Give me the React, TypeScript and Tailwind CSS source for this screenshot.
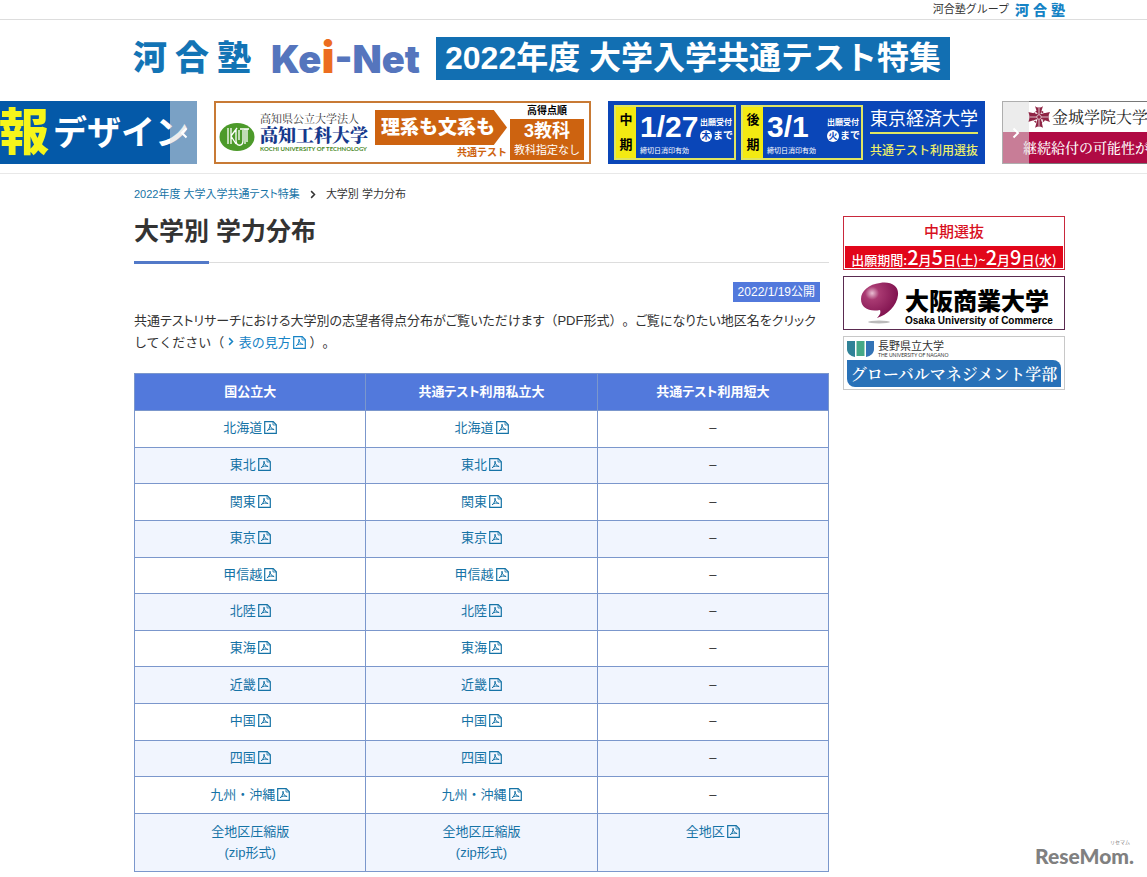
import type { ReactNode } from 'react';

const regions = ['北海道', '東北', '関東', '東京', '甲信越', '北陸', '東海', '近畿', '中国', '四国', '九州・沖縄'];

function PdfIcon() {
    return (
        <svg className="inline-block w-[13px] h-[13px] ml-[2px] align-[-2px]" viewBox="0 0 13 13" fill="none" stroke="currentColor" aria-hidden="true">
            <path d="M.7 .7H9.2L12.3 3.8V12.3H.7Z" strokeWidth="1.2" />
            <path d="M9 .9V4H12" strokeWidth=".8" />
            <path d="M6 3.2C6.2 6 5.2 8.2 3 10M6 3.2C6 6 7.6 8 10.2 8.6M3.6 9.2C5.4 8.1 7.6 7.7 10 8.5" strokeWidth="1" />
        </svg>
    );
}

function Chevron({ className, flip = false }: { className: string; flip?: boolean }) {
    return (
        <svg className={className} viewBox="0 0 8 12" fill="none" stroke="currentColor" strokeWidth="2" aria-hidden="true">
            <path d={flip ? 'M6.5 1.5L2 6L6.5 10.5' : 'M1.5 1.5L6 6L1.5 10.5'} />
        </svg>
    );
}

function KawaijukuLogo({ className }: { className: string }) {
    return (
        <a href="#" className={className}>
            <span>河</span>
            <span>合</span>
            <span>塾</span>
        </a>
    );
}

function DesignBanner() {
    return (
        <a href="#" className="flex h-full items-center justify-end gap-1 bg-[#0459a8] pr-2 font-black text-white">
            <span className="text-[50px] leading-[60px] text-[#f6f51a]">報</span>
            <span className="text-[34px] leading-[60px] font-bold">デザイン</span>
        </a>
    );
}

function KochiBanner() {
    return (
        <a href="#" className="flex h-full border-2 border-[#c87a35] bg-white pl-[3px] pr-1">
            <svg className="mt-[19px] h-[30px] w-[36px] shrink-0" viewBox="0 0 36 30" aria-hidden="true">
                <ellipse cx="18" cy="15" rx="17.5" ry="14" fill="#4c9a2a" />
                <path d="M9 6V22M12 6V22M12 14L18 6M12 14L17 22M17 8V18C17 25 24 25 24 18V8M20 8V18M21 7H30M26 7V22M28 7V20" fill="none" stroke="#fff" strokeWidth="1.3" />
            </svg>
            <div className="ml-[5px] mt-2 w-[112px] shrink-0 whitespace-nowrap font-['Noto_Serif_CJK_JP','Noto_Sans_CJK_JP',serif]">
                <p className="text-[11px] leading-[14px] text-[#333]">高知県公立大学法人</p>
                <p className="text-[18px] font-black leading-[19px] text-[#16398c]">高知工科大学</p>
                <p className="font-['Lato',sans-serif] text-[6px] font-bold leading-[9px] text-[#4c8a2a]">KOCHI UNIVERSITY OF TECHNOLOGY</p>
            </div>
            <div className="ml-[3px] mt-[7px] w-[132px] shrink-0 text-right">
                <p className="bg-[#cd6310] pr-[12px] text-[19px] font-black leading-[35px] text-white [clip-path:polygon(0_0,90%_0,100%_50%,90%_100%,0_100%)]">理系も文系も</p>
                <p className="text-[10px] font-bold leading-[15px] text-[#cd6310]">共通テスト</p>
            </div>
            <div className="ml-[3px] w-[74px] shrink-0 text-center">
                <p className="text-[10px] font-bold leading-[16px] text-black">高得点順</p>
                <div className="h-[41px] bg-[#cd6310] text-white">
                    <p className="text-[18px] font-bold leading-[24px]">3教科</p>
                    <p className="text-[11px] leading-[15px]">教科指定なし</p>
                </div>
            </div>
        </a>
    );
}

function DateBox({ term, date, day }: { term: string[]; date: string; day: string }) {
    return (
        <div className="flex h-[55px] w-[122px] shrink-0 border-2 border-[#dfe562] text-white">
            <div className="flex w-[20px] flex-col justify-around bg-[#f3ea12] text-center text-[13px] font-bold leading-[18px] text-black">
                <span>{term[0]}</span>
                <span>{term[1]}</span>
            </div>
            <div className="ml-1 flex-1">
                <div className="flex h-[39px] items-center justify-between pr-px">
                    <span className="text-[30px] font-bold leading-[39px]">{date}</span>
                    <span className="shrink-0 pt-[7px] text-[8px] font-bold leading-[12px]">
                        出願受付
                        <span className="flex items-center text-[10px] leading-[14px]">
                            <span className="mr-px h-[12px] w-[12px] rounded-full bg-white text-center text-[9px] leading-[12px] text-[#0a46b8]">{day}</span>
                            まで
                        </span>
                    </span>
                </div>
                <p className="text-[7px] leading-[9px]">締切日消印有効</p>
            </div>
        </div>
    );
}

function TokyoKeizaiBanner() {
    return (
        <a href="#" className="flex h-full gap-[5px] bg-[#0a46b8] pl-[6px] pt-1">
            <DateBox term={['中', '期']} date="1/27" day="木" />
            <DateBox term={['後', '期']} date="3/1" day="火" />
            <div className="ml-[2px] w-[108px] whitespace-nowrap">
                <p className="h-[29px] border-b-2 border-[#dfe562] text-[18px] leading-[28px] text-white">東京経済大学</p>
                <p className="pt-2 text-[12px] font-medium leading-[18px] text-[#eef06a]">共通テスト利用選抜</p>
            </div>
        </a>
    );
}

function KinjoBanner() {
    return (
        <a href="#" className="block h-full border border-[#777] bg-white font-['Noto_Serif_CJK_JP','Noto_Sans_CJK_JP',serif]">
            <div className="flex h-[30px] items-center gap-[2px] pl-[25px] text-[16px] text-[#222]">
                <svg className="h-[22px] w-[22px]" viewBox="0 0 22 22" aria-hidden="true">
                    <path d="M7 0C9 2 13 2 15 0L12.500 8L22 6C20 9 20 13 22 16L13 13L15 22C13 20 9 20 7 22L9.500 13L0 16C2 13 2 9 0 6L9.500 8Z" fill="#8f2545" />
                    <circle cx="11" cy="11" r="6" fill="none" stroke="#8f2545" strokeWidth="1.5" strokeDasharray="2 1" />
                    <path d="M11 2V20M2 11H20" stroke="#fff" strokeWidth=".7" />
                    <circle cx="11" cy="11" r="2.200" fill="#8f2545" stroke="#fff" strokeWidth=".6" />
                </svg>
                金城学院大学
            </div>
            <p className="h-[31px] bg-[#b00a44] pl-5 text-[14px] font-medium leading-[30px] text-white">継続給付の可能性が</p>
        </a>
    );
}

function CarouselItem({ children }: { children: ReactNode }) {
    return <li className="relative h-[63px] w-[377px] shrink-0 overflow-hidden">{children}</li>;
}

function Carousel() {
    return (
        <div className="overflow-hidden border-b border-[#e8e8e8] pb-[9px]">
            <ul className="-ml-[180px] flex gap-[17px]">
                <CarouselItem>
                    <DesignBanner />
                    <button type="button" aria-label="前へ" className="absolute right-0 top-0 flex h-full w-[27px] items-center justify-center bg-[#ddd]/55 text-white">
                        <Chevron flip className="h-[12px] w-[8px]" />
                    </button>
                </CarouselItem>
                <CarouselItem><KochiBanner /></CarouselItem>
                <CarouselItem><TokyoKeizaiBanner /></CarouselItem>
                <CarouselItem>
                    <KinjoBanner />
                    <button type="button" aria-label="次へ" className="absolute left-0 top-0 flex h-full w-[27px] items-center justify-center bg-[#ddd]/55 text-white">
                        <Chevron className="h-[12px] w-[8px]" />
                    </button>
                </CarouselItem>
            </ul>
        </div>
    );
}

function Sidebar() {
    return (
        <aside className="flex w-[222px] shrink-0 flex-col gap-[6px] pt-[42px]">
            <a href="#" className="block h-[54px] border border-[#c9283c] bg-white p-px text-center">
                <p className="text-[15px] font-medium leading-[28px] text-[#d8101e]">中期選抜</p>
                <p className="flex h-[22px] items-baseline justify-center whitespace-nowrap bg-[#e2061a] font-['Noto_Sans_CJK_JP',sans-serif] text-[13px] font-medium leading-[22px] text-white">
                    出願期間:
                    <span className="text-[20px]">2</span>月<span className="text-[20px]">5</span>日(土)~
                    <span className="text-[20px]">2</span>月<span className="text-[20px]">9</span>日(水)
                </p>
            </a>
            <a href="#" className="flex h-[54px] gap-[6px] border border-[#5a2a50] bg-white pl-4 pt-[5px] text-black">
                <svg className="h-[43px] w-[39px] shrink-0" viewBox="0 0 39 43" aria-hidden="true">
                    <defs>
                        <radialGradient id="bubble" cx=".3" cy=".3" r=".75">
                            <stop offset="0" stopColor="#e9bfd3" />
                            <stop offset=".25" stopColor="#a93a72" />
                            <stop offset="1" stopColor="#7d0f4c" />
                        </radialGradient>
                    </defs>
                    <ellipse cx="19" cy="40" rx="11" ry="1.500" fill="#bbb" />
                    <path d="M20 1C31 -1 39 4 38 13C37 24 27 33 17 36C20 33 21 31 20 28C9 30 1 26 1 17C1 9 9 2 20 1Z" fill="url(#bubble)" />
                </svg>
                <div className="whitespace-nowrap">
                    <p className="mt-[6px] text-[24px] font-black leading-[28px]">大阪商業大学</p>
                    <p className="text-[10px] font-bold leading-[10px]">Osaka University of Commerce</p>
                </div>
            </a>
            <a href="#" className="block h-[54px] border border-[#c8c8c8] bg-white px-[3px] pt-[3px]">
                <div className="flex h-[20px] gap-1">
                    <svg className="h-[17px] w-[27px]" viewBox="0 0 27 17" aria-hidden="true">
                        <path d="M0 1H8V17C3 16 0 13 0 9Z" fill="#2f8297" />
                        <path d="M9.500 1H17.500V16H9.500Z" fill="#45a886" />
                        <path d="M19 1H27V9C27 13 24 16 19 17Z" fill="#3373b6" />
                    </svg>
                    <div className="whitespace-nowrap text-[#333]">
                        <p className="text-[11px] leading-[12px]">長野県立大学</p>
                        <p className="font-['Lato',sans-serif] text-[5px] leading-[6px]">THE UNIVERSITY OF NAGANO</p>
                    </div>
                </div>
                <p className="whitespace-nowrap rounded-bl-lg rounded-tr-lg bg-[#2871b8] text-center font-['Noto_Serif_CJK_JP','Noto_Sans_CJK_JP',serif] text-[16px] font-semibold leading-[27px] text-white">グローバルマネジメント学部</p>
            </a>
        </aside>
    );
}

function ScoreTable() {
    const cell = 'border border-[#7b97cc] pb-[2px] text-center';

    return (
        <table className="mt-[19px] h-[499px] w-full table-fixed border-collapse text-[13px] leading-[21px]">
            <thead className="[font-feature-settings:'palt']">
                <tr className="bg-[#5279dc] text-white">
                    <th className="h-[37px] border border-[#7b97cc] pb-[2px] font-bold">国公立大</th>
                    <th className="border border-[#7b97cc] pb-[2px] font-bold">共通テスト利用私立大</th>
                    <th className="border border-[#7b97cc] pb-[2px] font-bold">共通テスト利用短大</th>
                </tr>
            </thead>
            <tbody className="text-[#1673a6]">
                {regions.map((region) => (
                    <tr key={region} className="even:bg-[#f1f5fe]">
                        <td className={cell}><a href="#">{region}<PdfIcon /></a></td>
                        <td className={cell}><a href="#">{region}<PdfIcon /></a></td>
                        <td className="border border-[#7b97cc] pb-[2px] text-center text-[#333]">–</td>
                    </tr>
                ))}
                <tr className="bg-[#f1f5fe]">
                    <td className="h-[58px] border border-[#7b97cc] pb-[2px] text-center"><a href="#">全地区圧縮版<br />(zip形式)</a></td>
                    <td className={cell}><a href="#">全地区圧縮版<br />(zip形式)</a></td>
                    <td className="border border-[#7b97cc] pt-[7px] text-center align-top"><a href="#">全地区<PdfIcon /></a></td>
                </tr>
            </tbody>
        </table>
    );
}

export default function App() {
    return (
        <div lang="ja" className="relative overflow-hidden bg-white pb-[5px] font-['Liberation_Sans','Noto_Sans_CJK_JP',sans-serif] text-[#333]">
            <div className="flex h-[20px] items-center justify-end gap-[6px] border-b border-[#ddd] pr-[82px] text-[11px]">
                <span>河合塾グループ</span>
                <KawaijukuLogo className="flex gap-1 text-[14px] font-black leading-[18px] text-[#1683c5]" />
            </div>

            <header className="flex h-[81px] items-center pb-[5px] pl-[133px]">
                <KawaijukuLogo className="flex gap-2 text-[34px] font-black leading-[42px] text-[#1374b5]" />
                <a href="#" className="ml-5 w-[148px] whitespace-nowrap font-['Inter',sans-serif] text-[38px] font-black leading-[42px] text-[#5575bd]">
                    Ke<span className="text-[44px] text-[#ec6d1f]">i</span>-Net
                </a>
                <p className="ml-[17px] whitespace-nowrap bg-[#126fb2] px-[9px] text-[32px] font-bold leading-[43px] text-white">2022年度 大学入学共通テスト特集</p>
            </header>

            <Carousel />

            <div className="flex gap-[14px] pl-[134px] pr-[82px]">
                <main className="min-w-0 flex-1">
                    <nav className="flex items-center gap-[10px] pt-[11px] text-[11px] leading-[18px] [font-feature-settings:'palt']">
                        <a href="#" className="text-[#1673a6]">2022年度 大学入学共通テスト特集</a>
                        <Chevron className="h-[9px] w-[6px]" />
                        <span>大学別 学力分布</span>
                    </nav>

                    <h1 className="pt-[10px] text-[25px] font-bold leading-[36px]">大学別 学力分布</h1>
                    <div className="mt-3 flex items-center">
                        <span className="h-[3px] w-[75px] bg-[#5279c8]"></span>
                        <span className="h-px flex-1 bg-[#ddd]"></span>
                    </div>

                    <p className="mr-[9px] mt-[18px] text-right text-[12px] leading-[20px]">
                        <span className="inline-block bg-[#5279dc] px-[5px] text-white">2022/1/19公開</span>
                    </p>
                    <p className="mt-[8px] text-[13px] leading-[22px] [text-spacing-trim:space-all]">
                        <span className="[font-feature-settings:'palt']">共通テストリサーチにおける大学別の志望者得点分布がご覧いただけます</span>
                        （PDF形式）。
                        <span className="[font-feature-settings:'palt']">ご覧になりたい地区名をクリック</span>
                        <br />
                        してください（{' '}
                        <a href="#" className="text-[#1683c5]">
                            <Chevron className="mr-[5px] inline-block h-[9px] w-[6px] align-[1px]" />
                            表の見方<PdfIcon />
                        </a>
                        {' '}）。
                    </p>

                    <ScoreTable />
                </main>

                <Sidebar />
            </div>

            <div className="absolute bottom-[9px] right-[13px] text-right font-['Lato',sans-serif] text-[#808080]">
                <p className="pr-1 font-['Noto_Sans_CJK_JP',sans-serif] text-[5px] leading-[5px]">リセマム</p>
                <p className="text-[21px] font-black leading-[24px]">ReseMom.</p>
            </div>
        </div>
    );
}
